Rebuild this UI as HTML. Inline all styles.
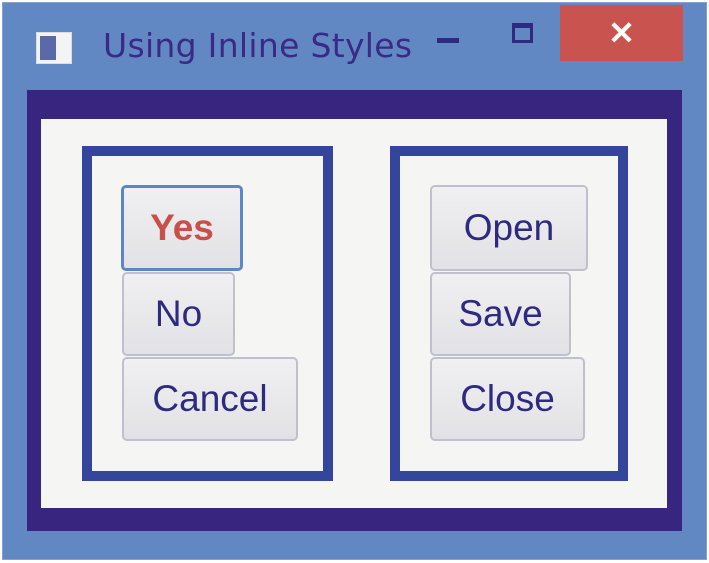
<!DOCTYPE html>
<html><head><style>
*{margin:0;padding:0;box-sizing:border-box}
body{width:709px;height:563px;background:#fff;position:relative;overflow:hidden;font-family:"Liberation Sans",sans-serif}
.a{position:absolute}
.btn{position:absolute;border:2px solid #c0c0cc;border-radius:5px;background:linear-gradient(#f0f0f2,#e2e2e6);color:#2e2a80;font-size:37px;display:flex;align-items:center;justify-content:center}
</style></head><body>
<div class="a" style="left:2px;top:2px;width:705px;height:558px;background:#6288c4;border:1px solid #8aa0cc"></div>
<div class="a" style="left:36px;top:32px;width:36px;height:32px;background:#f4f4f4;border:1px solid #ddd"></div>
<div class="a" style="left:40px;top:36px;width:16px;height:24px;background:#5a6aa8"></div>
<div class="a" style="left:103px;top:26px;font-size:33px;color:#3b2a85;font-family:'DejaVu Sans',sans-serif;letter-spacing:0.3px">Using Inline Styles</div>
<div class="a" style="left:437px;top:38px;width:22px;height:5px;background:#2f2a80"></div>
<div class="a" style="left:512px;top:23px;width:21px;height:20px;border:3px solid #2f2a80;border-top-width:5px"></div>
<div class="a" style="left:560px;top:5px;width:123px;height:56px;background:#c9544f;color:#fff;font-size:32px;display:flex;align-items:center;justify-content:center;font-weight:bold">✕</div>
<div class="a" style="left:27px;top:90px;width:655px;height:441px;background:#38257f"></div>
<div class="a" style="left:41px;top:119px;width:626px;height:389px;background:#f5f5f4"></div>
<div class="a" style="left:82px;top:146px;width:251px;height:335px;border:10px solid #34459c"></div>
<div class="a" style="left:390px;top:146px;width:238px;height:335px;border:10px solid #34459c"></div>
<div class="btn" style="left:121px;top:185px;width:122px;height:86px;border:3px solid #5b87c8;color:#c9504a;font-weight:bold">Yes</div>
<div class="btn" style="left:122px;top:272px;width:113px;height:84px">No</div>
<div class="btn" style="left:122px;top:357px;width:176px;height:84px">Cancel</div>
<div class="btn" style="left:430px;top:185px;width:158px;height:86px">Open</div>
<div class="btn" style="left:430px;top:272px;width:141px;height:84px">Save</div>
<div class="btn" style="left:430px;top:357px;width:155px;height:84px">Close</div>
</body></html>
